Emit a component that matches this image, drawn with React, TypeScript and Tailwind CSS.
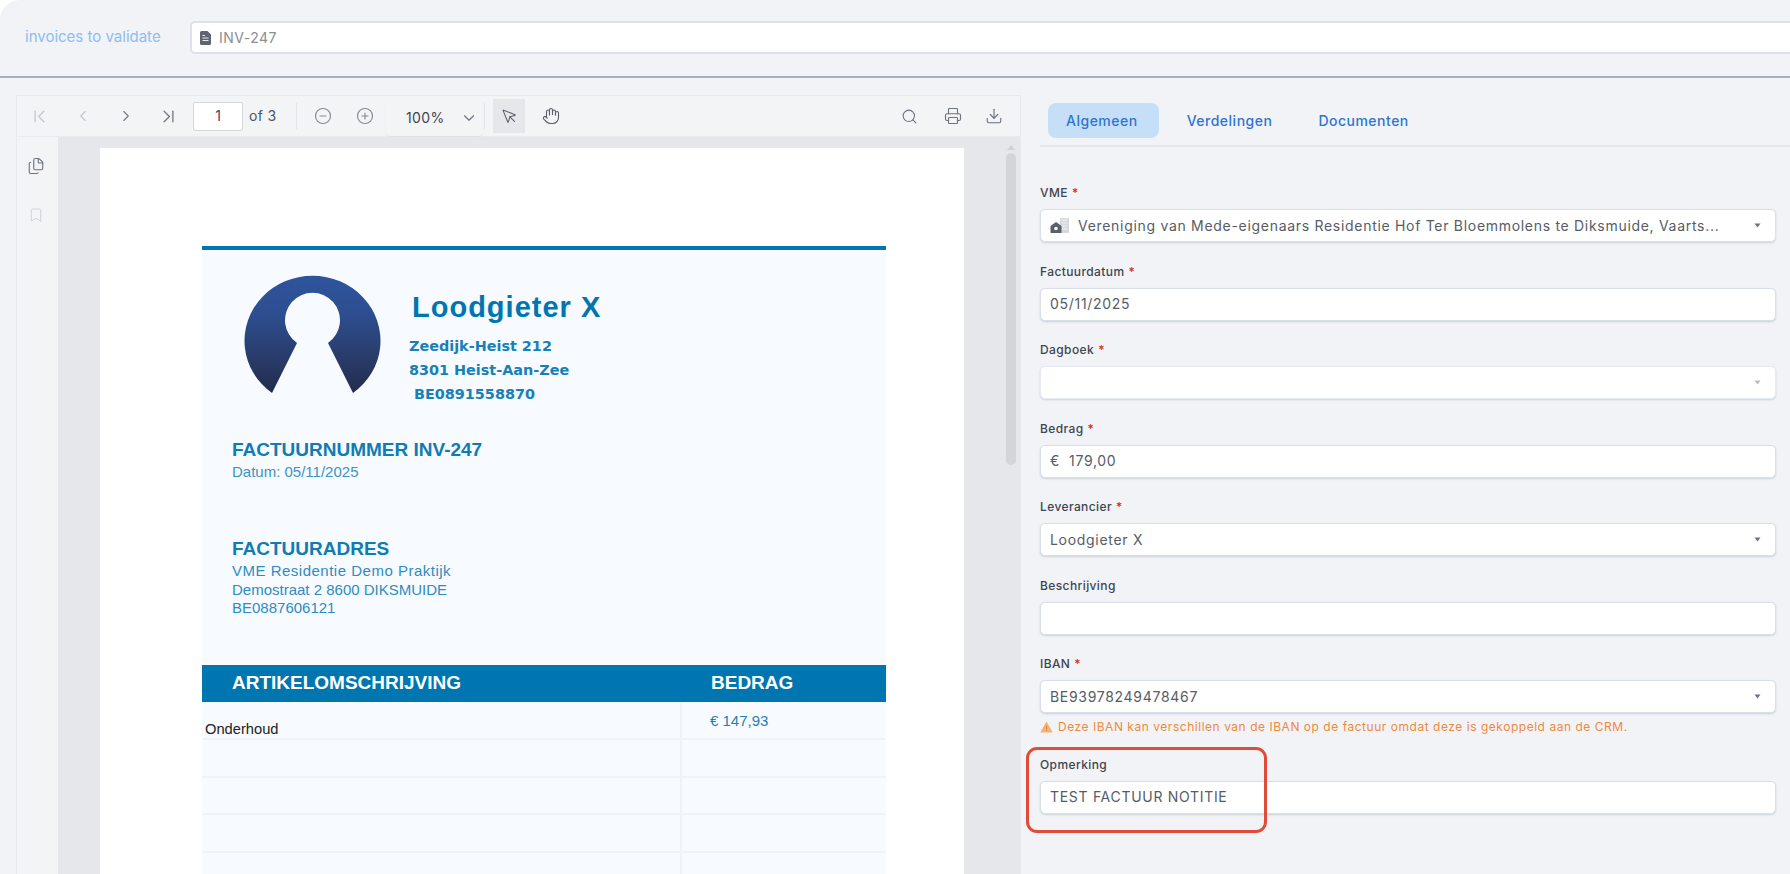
import type { ReactNode } from "react";
import {
  Bookmark,
  ChevronDown,
  ChevronFirst,
  ChevronLast,
  ChevronLeft,
  ChevronRight,
  CircleMinus,
  CirclePlus,
  Download,
  Files,
  Hand,
  MousePointer,
  Printer,
  Search,
} from "lucide-react";

const Caret = ({ light }: { light?: boolean }) => (
  <svg width="7" height="5" viewBox="0 0 7 5" className="ml-auto mr-[14px] shrink-0">
    <path d="M0.5 0.5h6L3.5 4.5z" fill={light ? "#b6bbc4" : "#6b7280"} />
  </svg>
);

const BuildingIcon = () => (
  <svg width="20" height="18" viewBox="0 0 20 18" className="shrink-0">
    <rect x="10" y="1" width="9" height="15" fill="#d5d8dd" />
    <path d="M12 3h5M12 6h5M12 9h5M12 12h5" stroke="#f3f4f6" strokeWidth="1" />
    <path d="M0.5 16V9l5.5-4 5.5 4v7z" fill="#5b6068" />
    <circle cx="6" cy="11.5" r="1.8" fill="#fff" />
  </svg>
);

const DocIcon = () => (
  <svg width="11" height="14" viewBox="0 0 11 14" className="shrink-0">
    <path d="M1.5 0h6L11 3.5V12.5A1.5 1.5 0 0 1 9.5 14h-8A1.5 1.5 0 0 1 0 12.5v-11A1.5 1.5 0 0 1 1.5 0z" fill="#5f6570" />
    <path d="M2.5 7h6M2.5 9.5h6M2.5 4.5h2.5" stroke="#e8eaee" strokeWidth="1" />
  </svg>
);

const WarnIcon = () => (
  <svg width="13" height="12" viewBox="0 0 13 12" className="shrink-0">
    <path d="M6.5 0.5L12.8 11.5H0.2z" fill="#f2b27a" />
    <path d="M6.5 4.5v3.5M6.5 9v1" stroke="#e87f2e" strokeWidth="1" />
  </svg>
);

const Logo = () => (
  <svg width="138" height="118" viewBox="0 0 138 118" className="shrink-0">
    <defs>
      <linearGradient id="keyhole" x1="0" y1="0" x2="0" y2="1">
        <stop offset="0" stopColor="#2d549c" />
        <stop offset="0.3" stopColor="#2d4f92" />
        <stop offset="0.55" stopColor="#2b4379" />
        <stop offset="0.8" stopColor="#273760" />
        <stop offset="1" stopColor="#232c4d" />
      </linearGradient>
    </defs>
    <path
      d="M109 118A68 65 0 1 0 28 118L53 68A27.5 27.5 0 1 1 84 68Z"
      fill="url(#keyhole)"
    />
  </svg>
);

const Label = ({ text, required }: { text: string; required?: boolean }) => (
  <div className="h-4 mb-2 text-xs leading-4 tracking-[0.4px] font-medium text-[#3f4550]">
    {text}
    {required && <span className="ml-1 text-[#dc2626]">*</span>}
  </div>
);

const Box = ({ children, light }: { children?: ReactNode; light?: boolean }) => (
  <div
    className={`h-[33px] flex items-center pl-[9px] bg-white rounded-[5px] border shadow-[0_1px_2px_rgba(100,116,139,0.25)] text-sm tracking-[0.7px] text-[#565c66] ${
      light ? "border-[#e6ebf1]" : "border-[#d8dfe8]"
    }`}
  >
    {children}
  </div>
);

const Toolbar = () => (
  <div className="h-[41px] shrink-0 flex items-center pl-px bg-[#f3f4f6] border-b border-[#e9eaed] text-[#6b7280]">
    <span className="w-[43px] flex justify-center text-[#c3c6cc]"><ChevronFirst size={21} strokeWidth={1.5} /></span>
    <span className="w-[43px] flex justify-center text-[#c3c6cc]"><ChevronLeft size={18} strokeWidth={1.5} /></span>
    <span className="w-[43px] flex justify-center text-[#737880]"><ChevronRight size={18} strokeWidth={1.5} /></span>
    <span className="w-[43px] flex justify-center text-[#737880]"><ChevronLast size={21} strokeWidth={1.5} /></span>
    <div className="ml-[3px] w-[50px] h-[29px] flex items-center justify-center bg-white border border-[#d6d8dc] rounded-[2px] text-sm text-[#3f4550]">
      1
    </div>
    <span className="ml-[6px] w-[30px] text-sm tracking-[0.3px] text-[#4b5563]">of 3</span>
    <span className="ml-[17px] w-px h-[26px] bg-[#e3e5e8]" />
    <span className="ml-[4px] w-[43px] flex justify-center text-[#85898f]"><CircleMinus size={18} strokeWidth={1.5} /></span>
    <span className="w-[42px] flex justify-center text-[#85898f]"><CirclePlus size={18} strokeWidth={1.5} /></span>
    <div className="w-[97px] h-[37px] mt-[3px] flex items-center pl-[20px] rounded-[5px] shadow-[0_1px_2px_rgba(0,0,0,0.05)] text-sm tracking-[0.4px] text-[#3f4550]">
      100%
      <ChevronDown size={18} strokeWidth={1.5} className="ml-[15px] text-[#6b7280]" />
    </div>
    <span className="ml-px w-px h-[26px] bg-[#e3e5e8]" />
    <span className="ml-[8px] w-[32px] h-[34px] flex items-center justify-center bg-[#e5e7eb] text-[#5b6068]">
      <MousePointer size={17} strokeWidth={1.5} />
    </span>
    <span className="ml-[10px] w-[32px] flex justify-center text-[#5b6068]"><Hand size={18} strokeWidth={1.5} /></span>
    <span className="ml-auto w-[42px] flex justify-center text-[#6b7280]"><Search size={17} strokeWidth={1.5} /></span>
    <span className="w-[43px] pl-[2px] flex justify-center text-[#6b7280]"><Printer size={18} strokeWidth={1.5} /></span>
    <span className="w-[42px] mr-[5px] flex justify-center text-[#6b7280]"><Download size={18} strokeWidth={1.5} /></span>
  </div>
);

const Invoice = () => (
  <div className="ml-[42px] mt-[11px] w-[864px] shrink-0 h-[800px] bg-white pt-[98px] pl-[102px]">
    <div className="w-[684px] border-t-[4px] border-[#0076b0] bg-[#f7fafe] h-[700px] text-[#1f7fb5] [font-family:'Liberation_Sans',Arial,sans-serif]">
      <div className="h-[151px] flex pl-[42px] pt-[25px]">
        <Logo />
        <div className="ml-[27px] pt-[16px] [font-family:'DejaVu_Sans',sans-serif] font-bold text-[14.4px] leading-6 text-[#1680b8]">
          <div className="pl-[3px] h-8 text-[29px] leading-8 tracking-[1px] text-[#0076b0] [font-family:'Liberation_Sans',Arial,sans-serif]">
            Loodgieter X
          </div>
          <div className="mt-[11px]">Zeedijk-Heist 212</div>
          <div>8301 Heist-Aan-Zee</div>
          <div className="pl-[5px]">BE0891558870</div>
        </div>
      </div>
      <div className="pl-[30px]">
        <div className="mt-[38px] text-[19px] leading-[22px] font-bold text-[#0f7cb4]">FACTUURNUMMER INV-247</div>
        <div className="mt-[3px] text-[15px] leading-4 text-[#3d93c1]">Datum: 05/11/2025</div>
        <div className="mt-[58px] text-[19px] leading-[22px] font-bold text-[#0f7cb4]">FACTUURADRES</div>
        <div className="mt-[2px] text-[15px] leading-[18.5px] text-[#2f8cbe]">
          <div className="tracking-[0.5px]">VME Residentie Demo Praktijk</div>
          <div>Demostraat 2 8600 DIKSMUIDE</div>
          <div>BE0887606121</div>
        </div>
      </div>
      <div className="mt-[47px] h-[37px] flex items-center bg-[#0076b0] text-white text-[19px] font-bold">
        <div className="w-[478px] pl-[30px]">ARTIKELOMSCHRIJVING</div>
        <div className="pl-[31px]">BEDRAG</div>
      </div>
      {["Onderhoud", "", "", "", ""].map((item, i) => (
        <div key={i} className={`flex border-b-2 border-[#edf3f9] ${i === 0 ? "h-[38.5px]" : "h-[37.5px]"}`}>
          <div className="w-[480px] pl-[3px] flex items-end border-r-2 border-[#edf3f9] text-[14.7px] leading-[18px] text-[#222]">
            {item}
          </div>
          {i === 0 && <div className="pl-[28px] pt-[10px] text-[15px] leading-[18px] text-[#1f7fb5]">€ 147,93</div>}
        </div>
      ))}
    </div>
  </div>
);

const Viewer = () => (
  <div className="ml-4 mt-[17px] w-[1005px] shrink-0 flex flex-col border border-b-0 border-[#e8e9ec]">
    <Toolbar />
    <div className="flex-1 flex min-h-0 overflow-hidden bg-[#e5e7eb]">
      <div className="w-[41px] shrink-0 flex flex-col items-center pt-[20px] pr-[3px] bg-[#f3f4f6]">
        <Files size={18} strokeWidth={1.5} className="text-[#6b7280]" />
        <Bookmark size={16} strokeWidth={1.5} className="mt-[32px] text-[#d0d3d8]" />
      </div>
      <Invoice />
      <div className="ml-[41px] w-3 shrink-0 pt-[8px] flex flex-col items-center">
        <svg width="8" height="5" viewBox="0 0 8 5"><path d="M4 0L8 5H0z" fill="#cfd1d4" /></svg>
        <div className="mt-[3px] w-[10px] h-[312px] rounded-[5px] bg-[#d4d5d8]" />
      </div>
    </div>
  </div>
);

const Form = () => (
  <div className="mt-[38px] flex flex-col gap-[21.5px]">
    <div>
      <Label text="VME" required />
      <Box>
        <BuildingIcon />
        <span className="ml-[8px]">Vereniging van Mede-eigenaars Residentie Hof Ter Bloemmolens te Diksmuide, Vaarts...</span>
        <Caret />
      </Box>
    </div>
    <div>
      <Label text="Factuurdatum" required />
      <Box>05/11/2025</Box>
    </div>
    <div>
      <Label text="Dagboek" required />
      <Box light>
        <Caret light />
      </Box>
    </div>
    <div>
      <Label text="Bedrag" required />
      <Box>
        <span className="w-[19px]">€</span>179,00
      </Box>
    </div>
    <div>
      <Label text="Leverancier" required />
      <Box>
        Loodgieter X
        <Caret />
      </Box>
    </div>
    <div>
      <Label text="Beschrijving" />
      <Box />
    </div>
    <div>
      <Label text="IBAN" required />
      <Box>
        BE93978249478467
        <Caret />
      </Box>
      <div className="mt-[6px] h-4 flex items-center gap-[5px] text-xs tracking-[0.53px] text-[#f08a3c]">
        <WarnIcon />
        Deze IBAN kan verschillen van de IBAN op de factuur omdat deze is gekoppeld aan de CRM.
      </div>
    </div>
    <div className="relative">
      <Label text="Opmerking" />
      <Box>TEST FACTUUR NOTITIE</Box>
      <div className="absolute -left-[14px] -top-[10px] w-[241px] h-[86px] rounded-[11px] border-[3px] border-[#e14b3b]" />
    </div>
  </div>
);

const App = () => (
  <div className="h-[874px] w-[1790px] overflow-hidden bg-white [font-family:Inter,sans-serif]">
    <div className="h-full flex flex-col bg-[#f1f3f7] rounded-tl-[20px]">
      <div className="h-[78px] shrink-0 flex items-start pt-[21px] pl-[25px] border-b-2 border-[#a9aebb]">
        <a className="w-[165px] h-[33px] shrink-0 flex items-center text-[15px] text-[#8dbdf5]">invoices to validate</a>
        <div className="w-[1640px] shrink-0 h-[33px] flex items-center gap-[8px] pl-[8px] bg-white rounded-[5px] border-2 border-[#dde2ea] text-sm tracking-[0.5px] text-[#8a8e95]">
          <DocIcon />
          INV-247
        </div>
      </div>
      <div className="flex-1 min-h-0 flex">
        <Viewer />
        <div className="flex-1 min-w-0 pt-[25px]">
          <div className="ml-[19px] border-b-2 border-[#e4e6ea] h-[44px] flex gap-[10px] pl-[8px] text-sm tracking-[0.5px] text-[#2f74d0]">
            <div className="h-[35px] pl-[18px] pr-[21px] flex items-center rounded-lg bg-[#c6dff8] font-medium">Algemeen</div>
            <div className="h-[35px] px-[18px] flex items-center font-medium">Verdelingen</div>
            <div className="h-[35px] px-[18px] flex items-center font-medium">Documenten</div>
          </div>
          <div className="ml-[19px] mr-[14px]">
            <Form />
          </div>
        </div>
      </div>
    </div>
  </div>
);

export default App;
